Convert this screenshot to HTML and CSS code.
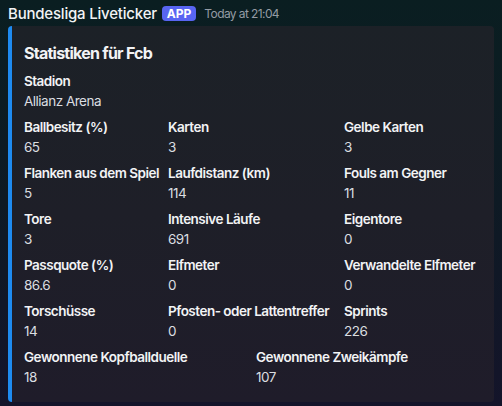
FILE: index.html
```html
<!DOCTYPE html>
<html lang="de">
<head>
<meta charset="utf-8">
<link rel="stylesheet" href="styles.css">
</head>
<body>
<div class="message">
  <div class="header">
    <span class="author">Bundesliga Liveticker</span>
    <span class="badge">APP</span>
    <span class="time">Today at 21:04</span>
  </div>
  <div class="embed">
    <div class="title">Statistiken für Fcb</div>
    <div class="fields">
      <div class="field full"><div class="name">Stadion</div><div class="value">Allianz Arena</div></div>

      <div class="field c1"><div class="name">Ballbesitz (%)</div><div class="value">65</div></div>
      <div class="field c2"><div class="name">Karten</div><div class="value">3</div></div>
      <div class="field c3"><div class="name">Gelbe Karten</div><div class="value">3</div></div>

      <div class="field c1"><div class="name">Flanken aus dem Spiel</div><div class="value">5</div></div>
      <div class="field c2"><div class="name">Laufdistanz (km)</div><div class="value">114</div></div>
      <div class="field c3"><div class="name">Fouls am Gegner</div><div class="value">11</div></div>

      <div class="field c1"><div class="name">Tore</div><div class="value">3</div></div>
      <div class="field c2"><div class="name">Intensive Läufe</div><div class="value">691</div></div>
      <div class="field c3"><div class="name">Eigentore</div><div class="value">0</div></div>

      <div class="field c1"><div class="name">Passquote (%)</div><div class="value">86.6</div></div>
      <div class="field c2"><div class="name">Elfmeter</div><div class="value">0</div></div>
      <div class="field c3"><div class="name">Verwandelte Elfmeter</div><div class="value">0</div></div>

      <div class="field c1"><div class="name">Torschüsse</div><div class="value">14</div></div>
      <div class="field c2"><div class="name">Pfosten- oder Lattentreffer</div><div class="value">0</div></div>
      <div class="field c3"><div class="name">Sprints</div><div class="value">226</div></div>

      <div class="field h1"><div class="name">Gewonnene Kopfballduelle</div><div class="value">18</div></div>
      <div class="field h2"><div class="name">Gewonnene Zweikämpfe</div><div class="value">107</div></div>
    </div>
  </div>
</div>
</body>
</html>
```
FILE: styles.css
```css
html, body {
  margin: 0;
  height: 100%;
}
body {
  background: linear-gradient(to bottom, #0a1e21 0%, #0e1a24 50%, #14142a 100%);
  font-family: Inter, "Noto Sans", sans-serif;
  color: #dbdee1;
}
.message {
  padding: 2px 8px 0 8px;
}
.header {
  display: flex;
  align-items: center;
  height: 22px;
}
.author {
  font-size: 15px;
  font-weight: 500;
  color: #f2f3f5;
  letter-spacing: -0.2px;
}
.badge {
  margin-left: 5px;
  background: #5865f2;
  color: #ffffff;
  font-size: 12px;
  font-weight: 700;
  height: 15px;
  line-height: 15px;
  padding: 0 5px;
  border-radius: 4px;
}
.time {
  margin-left: 8px;
  font-size: 12px;
  color: #949ba4;
  letter-spacing: -0.6px;
}
.embed {
  margin-top: 2px;
  background: linear-gradient(to bottom, #1c2127 0%, #1e1f28 50%, #1f1c2a 100%);
  border-left: 4px solid #1e8bf0;
  border-radius: 4px;
  padding: 8px 16px 16px 12px;
}
.title {
  margin-top: 8px;
  font-size: 16px;
  line-height: 22px;
  font-weight: 700;
  color: #f2f3f5;
  letter-spacing: -0.75px;
}
.fields {
  margin-top: 8px;
  display: grid;
  grid-template-columns: 144px 88px 88px 1fr;
  row-gap: 8px;
}
.field {
  font-size: 13.5px;
  line-height: 18px;
  letter-spacing: -0.5px;
}
.full { grid-column: 1 / -1; }
.c1 { grid-column: 1 / 2; }
.c2 { grid-column: 2 / 4; }
.c3 { grid-column: 4 / 5; }
.h1 { grid-column: 1 / 3; }
.h2 { grid-column: 3 / 5; }
.name {
  font-weight: 600;
  color: #f2f3f5;
  margin-bottom: 2px;
  white-space: nowrap;
}
.value {
  font-weight: 400;
  color: #dbdee1;
}
```
